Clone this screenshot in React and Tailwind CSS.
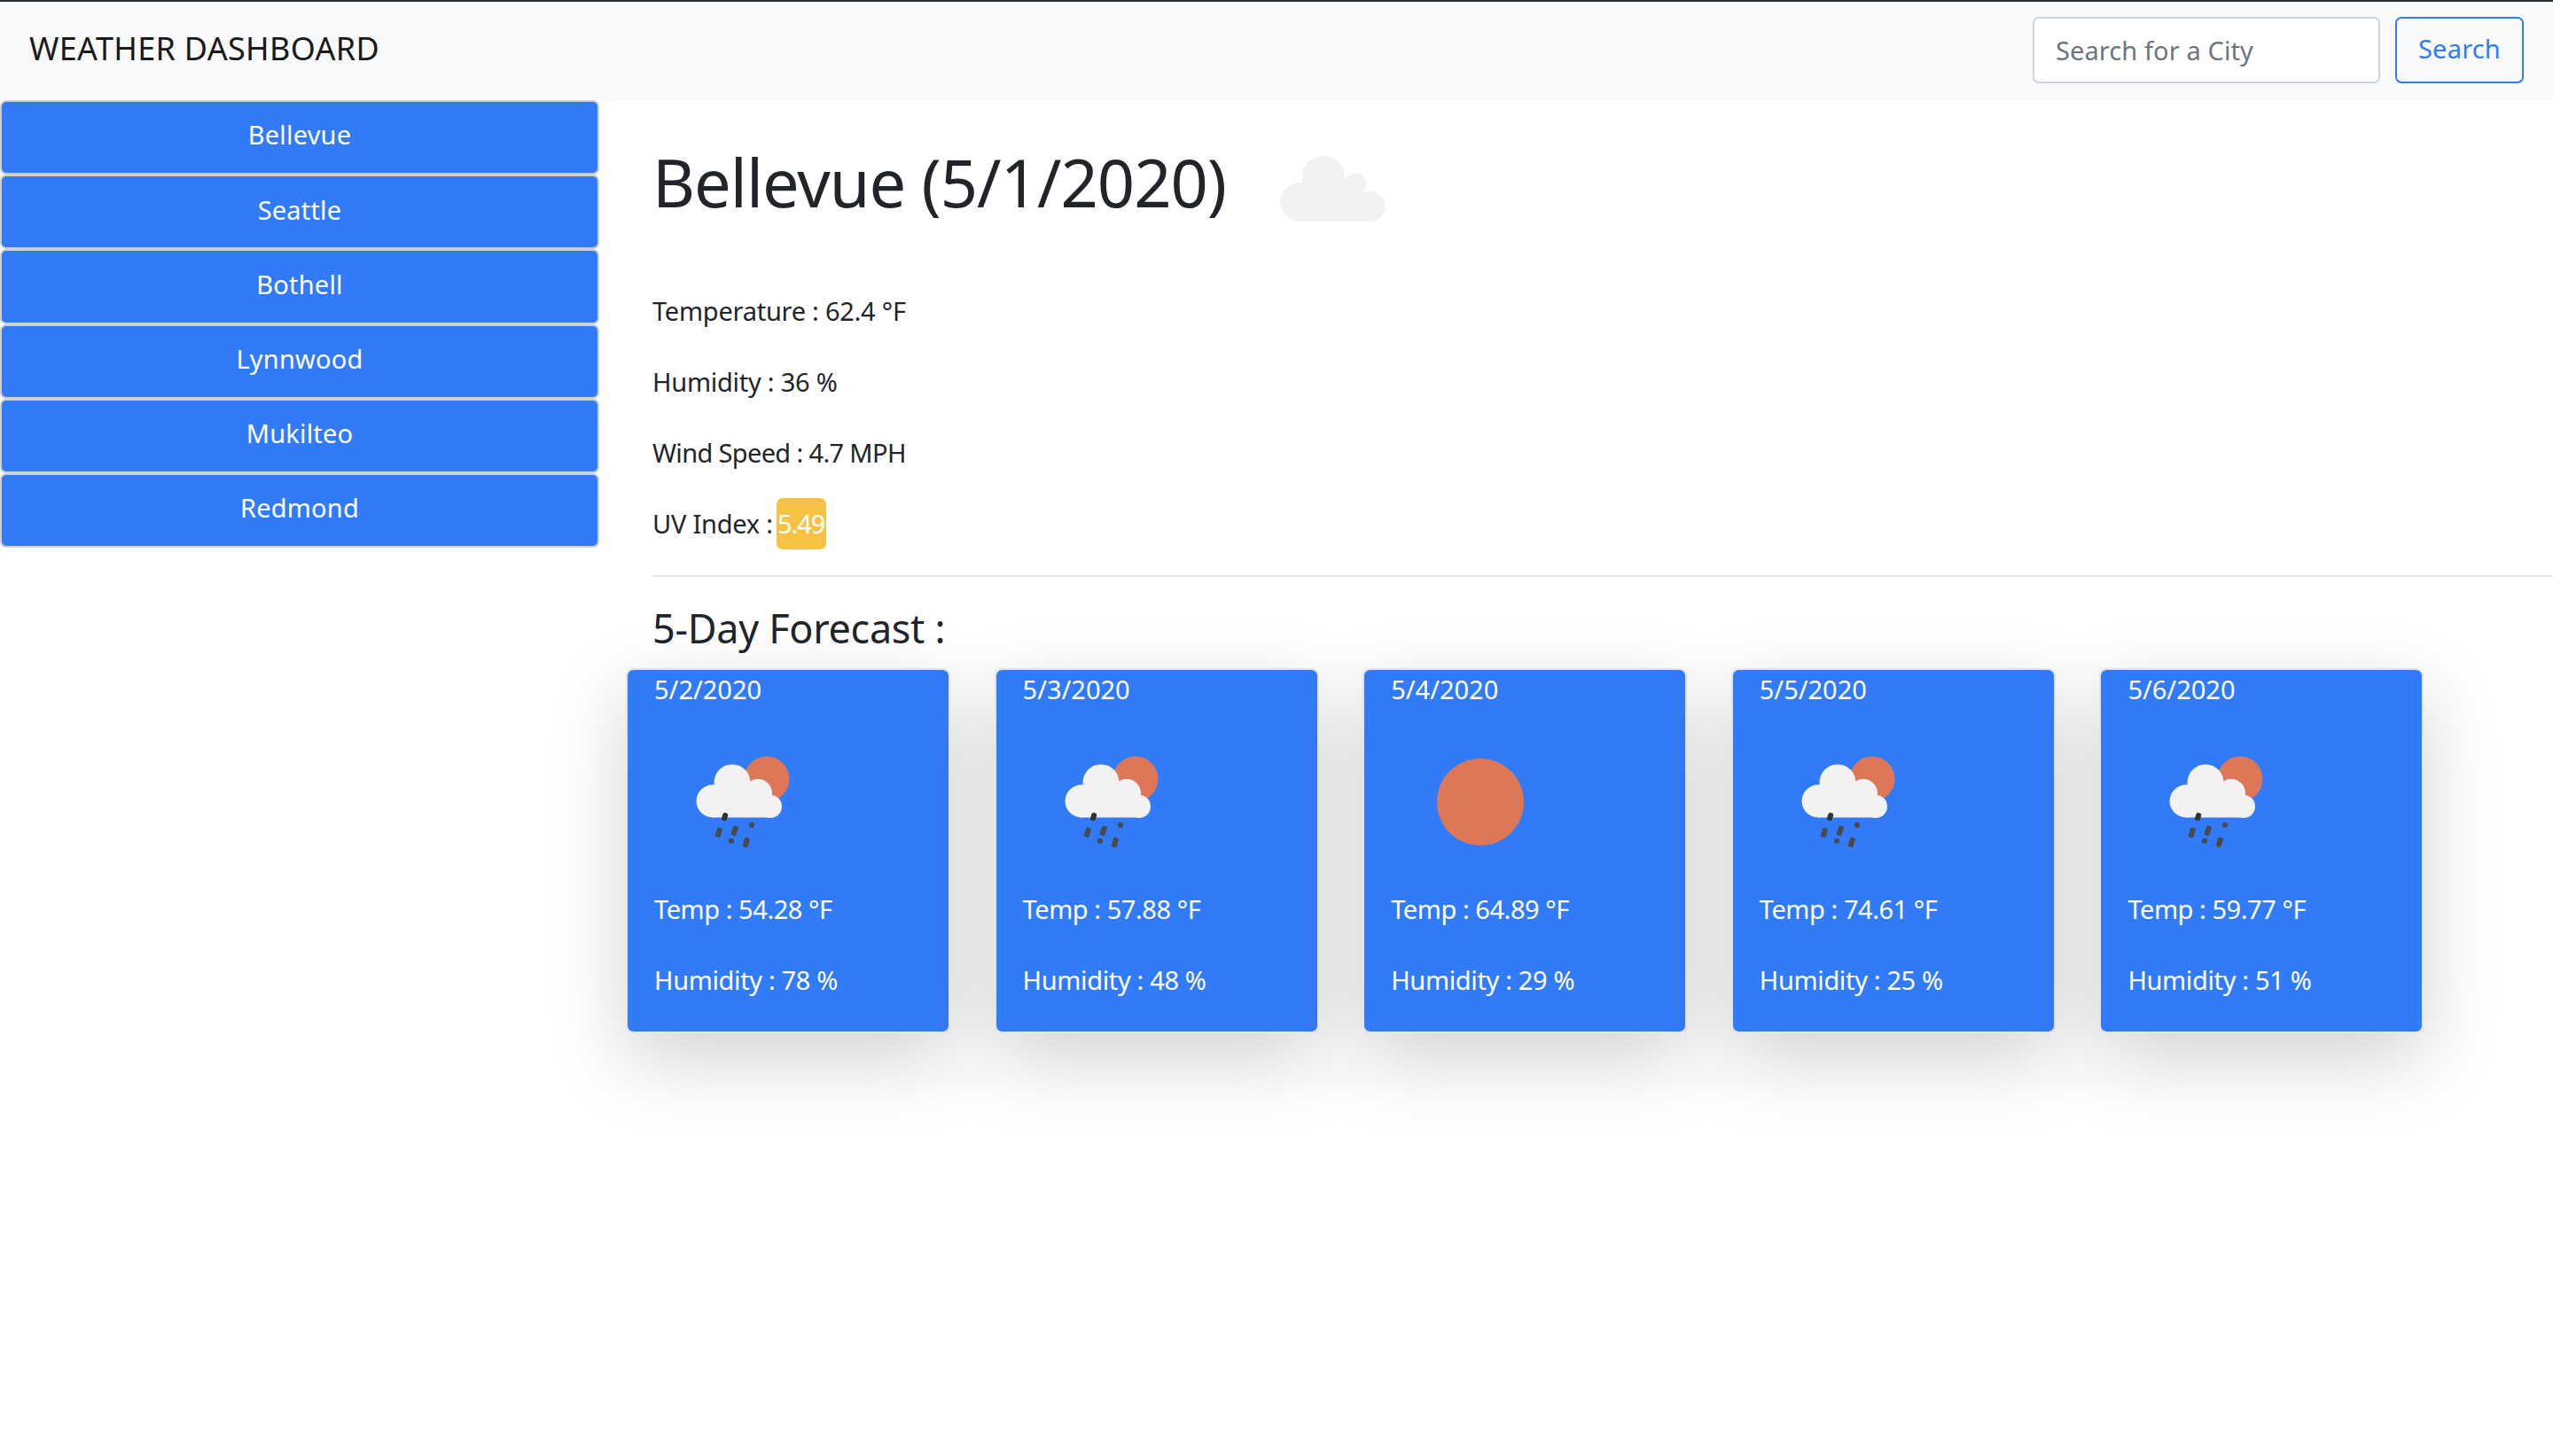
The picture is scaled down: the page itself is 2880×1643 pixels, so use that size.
const CITIES = ["Bellevue", "Seattle", "Bothell", "Lynnwood", "Mukilteo", "Redmond"];
const DAYS = [
  { date: "5/2/2020", temp: "54.28", hum: "78", icon: "rain" },
  { date: "5/3/2020", temp: "57.88", hum: "48", icon: "rain" },
  { date: "5/4/2020", temp: "64.89", hum: "29", icon: "sun" },
  { date: "5/5/2020", temp: "74.61", hum: "25", icon: "rain" },
  { date: "5/6/2020", temp: "59.77", hum: "51", icon: "rain" },
];

function RainIcon() {
  return (
    <svg width="160" height="140" viewBox="0 0 160 140" className="block">
      <circle cx="105" cy="50" r="25.5" fill="#dd7757" />
      <g fill="#f2f2f2">
        <circle cx="66" cy="54" r="20.5" />
        <circle cx="95" cy="66" r="16" />
        <circle cx="109" cy="81" r="13" />
        <circle cx="44" cy="75" r="18.5" />
        <rect x="44" y="70" width="65" height="23.5" />
        <rect x="50" y="56" width="36" height="20" />
      </g>
      <g fill="#4a4a4a">
        <rect x="54.5" y="88" width="6" height="9" rx="2.5" transform="rotate(18 57 93)" fill="#333" />
        <rect x="48" y="105" width="6" height="11" rx="1.5" transform="rotate(18 51 110)" />
        <rect x="66" y="103" width="6" height="11" rx="1.5" transform="rotate(18 69 108)" />
        <rect x="85" y="99" width="6" height="6" rx="2.5" transform="rotate(18 88 102)" />
        <rect x="62" y="117" width="6" height="6" rx="2.5" />
        <rect x="79" y="116" width="6" height="11" rx="1.5" transform="rotate(18 82 121)" />
      </g>
    </svg>
  );
}

function SunIcon() {
  return (
    <svg width="160" height="140" viewBox="0 0 160 140" className="block">
      <circle cx="79" cy="76" r="49" fill="#dd7757" />
    </svg>
  );
}

function BigCloud() {
  return (
    <svg width="120" height="76" viewBox="0 0 120 76" className="block" fill="#f2f2f2">
      <circle cx="49" cy="24" r="24" />
      <circle cx="85" cy="32" r="12.5" />
      <circle cx="22" cy="52" r="22" />
      <circle cx="102" cy="57" r="17" />
      <rect x="22" y="40" width="80" height="34" />
      <rect x="49" y="24" width="36" height="20" />
    </svg>
  );
}

function Card({ d }) {
  return (
    <div className="w-[366px] h-[412px] shrink-0 bg-[#327bf8] border-2 border-[#e4e4e4] rounded-[8px] text-white shadow-[0_29px_87px_rgba(0,0,0,0.175)] pl-[30px] [background-clip:padding-box]">
      <div className="h-[44px] leading-[44px] tracking-[0px]">{d.date}</div>
      <div className="mt-[29px] ml-[22px]">{d.icon === "rain" ? <RainIcon /> : <SunIcon />}</div>
      <div className="mt-[35px] h-[44px] leading-[44px] tracking-[-0.45px]">Temp : {d.temp} °F</div>
      <div className="mt-[36px] h-[44px] leading-[44px] tracking-[-0.35px]">Humidity : {d.hum} %</div>
    </div>
  );
}

export default function App() {
  return (
    <div className="min-h-[1643px] bg-white text-[#212529] font-['Noto_Sans',sans-serif] text-[29px] tracking-[-0.25px] overflow-hidden">
      <header className="h-[113px] bg-[#f8f9fa] border-t-2 border-[#2a2d31] flex items-center pl-[33px] pr-[33px]">
        <div className="text-[36px] text-[#1a1a1a] tracking-[0.3px] -mt-[6px]">WEATHER DASHBOARD</div>
        <div className="ml-auto flex gap-[17px] -mt-[2px]">
          <div className="w-[392px] h-[75px] bg-white border-2 border-[#ced4da] rounded-[7px] flex items-center pl-[24px] text-[#6c757d] tracking-[0.1px]">Search for a City</div>
          <button className="w-[145px] h-[75px] border-2 border-[#327bf8] rounded-[7px] text-[#327bf8] text-center tracking-[0.2px] pb-[4px]">Search</button>
        </div>
      </header>
      <div className="flex">
        <aside className="w-[706px] shrink-0 flex flex-col">
          {CITIES.map((c) => (
            <div key={c} className="w-[676px] h-[84.2px] bg-[#327bf8] border-2 border-[#cfcfcf] rounded-[7px] text-white tracking-[0.2px] flex items-center justify-center pb-[6px]">{c}</div>
          ))}
        </aside>
        <main className="flex-1">
          <div className="pl-[30px]">
            <div className="flex items-center h-[186px]">
              <h1 className="text-[74px] leading-none tracking-[-1px] font-normal">Bellevue (5/1/2020)</h1>
              <div className="ml-[61px] mt-[16px]"><BigCloud /></div>
            </div>
            <div className="mt-[30px] flex flex-col gap-[36px]">
              <div className="h-[44px] leading-[44px]">Temperature : 62.4 °F</div>
              <div className="h-[44px] leading-[44px]">Humidity : 36 %</div>
              <div className="h-[44px] leading-[44px] tracking-[-0.65px]">Wind Speed : 4.7 MPH</div>
              <div className="h-[44px] leading-[44px] flex items-center">
                UV Index :<span className="ml-[4px] w-[56px] h-[58px] bg-[#f5c243] rounded-[7px] text-white flex items-center justify-center tracking-[-1px]">5.49</span>
              </div>
            </div>
            <hr className="mt-[36px] border-0 h-[2px] bg-[#e5e5e5]" />
            <h2 className="mt-[36px] h-[44px] leading-[44px] text-[45px] tracking-[-0.3px] font-normal">5-Day Forecast :</h2>
          </div>
          <div className="mt-[23px] flex gap-[49.6px]">
            {DAYS.map((d) => <Card key={d.date} d={d} />)}
          </div>
        </main>
      </div>
    </div>
  );
}
